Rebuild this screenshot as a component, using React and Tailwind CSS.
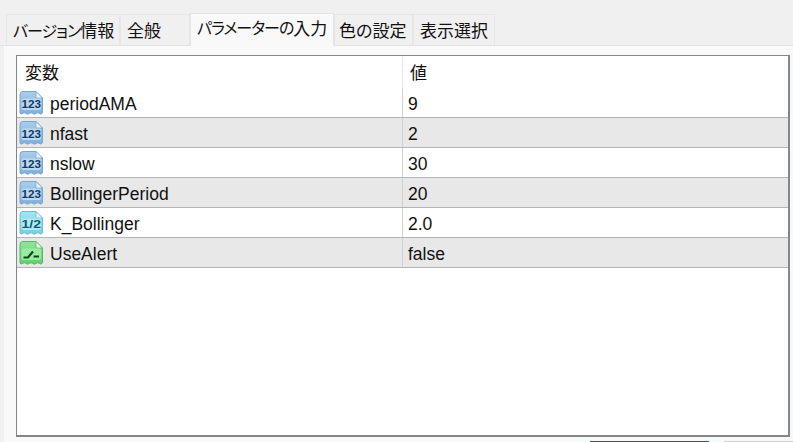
const FONT = "font-['Liberation_Sans','Noto_Sans_CJK_JP',sans-serif]";

function DocIcon({ id, top, bottom, stroke, band, ink, label, kind }) {
  return (
    <svg width="26" height="26" viewBox="0 0 26 26" className="shrink-0">
      <defs>
        <linearGradient id={id} x1="0" y1="0" x2="0" y2="1">
          <stop offset="0" stopColor={top} />
          <stop offset="1" stopColor={bottom} />
        </linearGradient>
      </defs>
      <path d="M2 4.5 Q2 1.5 5 1.5 H18 L24.5 8 V23 Q23 25 21.3 23.4 Q19.7 22 18 23.4 Q16.3 25 14.7 23.4 Q13 22 11.3 23.4 Q9.7 25 8 23.4 Q6.3 22 4.7 23.4 Q3 25 2 23 Z" fill={`url(#${id})`} stroke={stroke} strokeWidth="1" />
      <path d="M18 1.5 V8 H24.5 Z" fill="#eef5fb" stroke={stroke} strokeWidth="0.8" />
      <rect x="3.5" y="8.5" width="19.5" height="11.5" rx="2" fill={band} />
      {kind === "switch" ? (
        <path d="M5.5 17.5 H10 L15 11.5 M15.5 16.5 H21" fill="none" stroke={ink} strokeWidth="2.2" />
      ) : (
        <text x="3.5" y="18" fontSize="11" fontWeight="700" fill={ink} fontFamily="Liberation Sans, sans-serif" textLength="19.5" lengthAdjust="spacingAndGlyphs">{label}</text>
      )}
    </svg>
  );
}

const BLUE = { id: "b", top: "#a9cdec", bottom: "#7fb0dc", stroke: "#7da6cc", band: "#bcd8ef", ink: "#0f3a66", label: "123" };
const CYAN = { id: "c", top: "#a0e6f2", bottom: "#74cfe4", stroke: "#6fbfd2", band: "#aeeaf3", ink: "#145a70", label: "1/2" };
const GREEN = { id: "g", top: "#90e69a", bottom: "#62cf6e", stroke: "#5cb566", band: "#9aeaa3", ink: "#0c4a14", kind: "switch" };

const rows = [
  ["periodAMA", "9", BLUE],
  ["nfast", "2", BLUE],
  ["nslow", "30", BLUE],
  ["BollingerPeriod", "20", BLUE],
  ["K_Bollinger", "2.0", CYAN],
  ["UseAlert", "false", GREEN],
];

const KANA = "text-[16px] tracking-[-1px]";

const tabs = [
  { kana: "バージョン", rest: "情報", w: "w-[114px]", pl: "pl-[6px]" },
  { rest: "全般", w: "w-[70px]", pl: "pl-[6px]" },
  { kana: "パラメーターの", rest: "入力", w: "w-[144px]", pl: "pl-[6px]", active: true },
  { rest: "色の設定", w: "w-[79px]", pl: "pl-[4px]" },
  { rest: "表示選択", w: "w-[82px]", pl: "pl-[6px]" },
];

export default function App() {
  return (
    <div className={`${FONT} [font-feature-settings:'palt'] w-[793px] h-[442px] overflow-hidden bg-[#f0f0f0] text-[17px] leading-none text-[#111] flex flex-col`}>
      <div className="h-[46px] shrink-0 pl-[6px] flex items-end border-b border-[#e4e4e4]">
        {tabs.map(({ kana, rest, w, pl, active }) => (
          <div
            key={rest}
            className={`${w} ${pl} whitespace-nowrap flex items-center border-l border-t border-r ${
              active
                ? "h-[33px] -mb-px bg-[#f9f9f9] border-[#e4e4e4] pb-[2px] relative z-10"
                : "h-[31px] bg-[#f0f0f0] border-[#e6e6e6] pt-[3px]"
            }`}
          >
            {kana && <span className={KANA}>{kana}</span>}
            {rest}
          </div>
        ))}
      </div>
      <div className="flex-1 ml-[4px] bg-[#f9f9f9] pt-[9px] pl-[12px] flex flex-col">
        <div className="w-[774px] h-[382px] shrink-0 bg-white border border-[#82878f] border-b-2 border-r-2 flex flex-col">
          <div className="h-[32px] shrink-0 flex items-center">
            <div className="w-[386px] h-full pl-[8px] pt-[3px] flex items-center border-r border-[#e4e4e4]">変数</div>
            <div className="pl-[7px] pt-[3px]">値</div>
          </div>
          {rows.map(([name, value, icon], i) => (
            <div key={name} className={`h-[30px] shrink-0 flex items-center border-b border-[#b4b4b4] ${i % 2 ? "bg-[#e8e8e8]" : "bg-white"}`}>
              <div className="w-[386px] h-full pl-[1px] pt-[1px] flex items-center gap-[6px] border-r border-[#cfcfcf]">
                <DocIcon {...icon} />
                <span className="text-[17.5px] pt-[3px]">{name}</span>
              </div>
              <div className="pl-[5px] pt-[4px] text-[17.5px]">{value}</div>
            </div>
          ))}
        </div>
        <div className="mt-auto h-px flex gap-[15px] ml-[574px] shrink-0">
          <div className="w-[120px] bg-[#0067c0]"></div>
          <div className="w-[70px] bg-[#d0d0d0]"></div>
        </div>
      </div>
    </div>
  );
}
